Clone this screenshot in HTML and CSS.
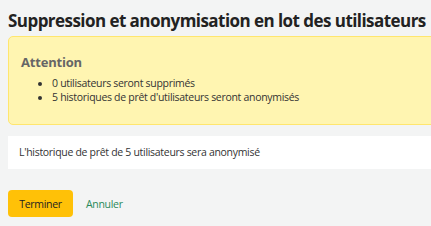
FILE: index.html
```html
<!DOCTYPE html>
<html lang="fr">
<head>
	<meta charset="utf-8" />
	<title>Suppression et anonymisation en lot des utilisateurs</title>
	<link rel="stylesheet" href="styles.css">
</head>
<body>
	<h1>Suppression et anonymisation en lot des utilisateurs</h1>
	<div class="dialog alert">
		<h3>Attention</h3>
		<ul>
			<li>0 utilisateurs seront supprimés</li>
			<li>5 historiques de prêt d'utilisateurs seront anonymisés</li>
		</ul>
	</div>
	<fieldset class="rows">
		L'historique de prêt de 5 utilisateurs sera anonymisé
	</fieldset>
	<fieldset class="action">
		<input type="submit" value="Terminer">
		<a class="cancel" href="#">Annuler</a>
	</fieldset>
</body>
</html>
```

FILE: styles.css
```css
* {
	box-sizing: border-box
}

body,
html {
	margin: 0;
	background-color: #f3f4f4;
	font-family: "Open Sans", sans-serif;
	color: #333;
}

body {
	padding: 0 0 0 8px;
	width: 460px;
}

h1 {
	font-size: 17px;
	font-weight: bold;
	letter-spacing: -0.55px;
	color: #222;
	margin: 0;
	padding: 9px 0 0 0;
	height: 36px;
	white-space: nowrap;
}

/* Alert box */
div.dialog {
	border-radius: 5px;
	padding: 16px 12px 9px 12px;
	margin: 0;
	height: 89px;
}

div.alert {
	background-color: #fff5b1;
	border: 1px solid #ffe66e;
}

h3 {
	color: #666;
	font-size: 13px;
	font-weight: bold;
	letter-spacing: -0.2px;
	margin: 0 0 5px 0;
}

ul {
	margin: 0;
	padding-left: 31px;
	font-size: 10.5px;
	letter-spacing: -0.3px;
	line-height: 14px;
	color: #333;
}

fieldset {
	border: none;
	margin: 0;
}

fieldset.rows {
	background-color: white;
	margin-top: 11px;
	height: 33px;
	padding: 9px 11px;
	font-size: 10.5px;
	letter-spacing: -0.3px;
}

fieldset.action {
	padding: 21px 0 0 0;
	display: flex;
	align-items: center;
	gap: 13px;
}

input[type=submit] {
	background-color: #ffc107;
	color: #222;
	font-family: "Open Sans", sans-serif;
	font-size: 10.5px;
	letter-spacing: -0.3px;
	width: 65px;
	height: 27px;
	border: none;
	border-radius: 4px;
	cursor: pointer;
}

a.cancel {
	color: #2a8a5a;
	font-size: 10.5px;
	letter-spacing: -0.3px;
	text-decoration: none;
}
```
